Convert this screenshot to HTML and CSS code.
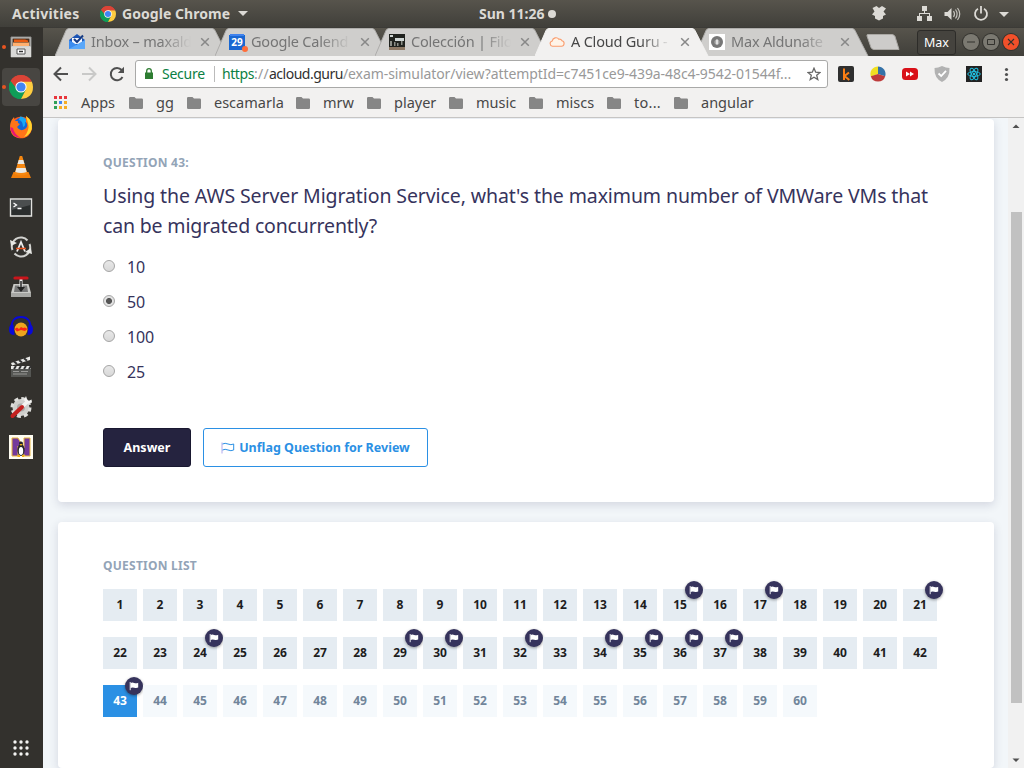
FILE: index.html
```html
<!DOCTYPE html>
<html lang="en">
<head>
<meta charset="utf-8">
<title>A Cloud Guru - Exam Simulator</title>
<link rel="stylesheet" href="styles.css">
</head>
<body>
<svg class="defs" aria-hidden="true">
  <symbol id="folder" viewBox="0 0 14 12"><path d="M1.3 0H5.5L7 1.5H12.7Q14 1.5 14 2.8V10.7Q14 12 12.7 12H1.3Q0 12 0 10.7V1.3Q0 0 1.3 0Z" fill="#868686"/></symbol>
  <symbol id="flag" viewBox="0 0 18 18"><path d="M5.2 5V13.2" stroke="#fff" stroke-width=".9"/><path d="M5.6 6Q7.3 5.2 9.2 6Q11.2 6.7 13.2 5.8V10.6Q11.3 11.4 9.2 10.7Q7.3 10 5.6 10.9Z" fill="#fff"/></symbol>
  <symbol id="chrome" viewBox="0 0 24 24"><path d="M12 12L1.6 6A12 12 0 0 1 22.4 6Z" fill="#db4437"/><path d="M12 12V24A12 12 0 0 1 1.6 6Z" fill="#0f9d58"/><path d="M1.6 6L7 15Q9 17.5 12 17.5L16.8 15L12 24Q4 24 1 17Q-1 11 1.6 6Z" fill="#0f9d58"/><path d="M16.8 14.8L12 24Q24 23 24 12Q24 9 22.7 6.5H12Z" fill="#ffcd40"/><path d="M1.6 6Q5 0 12 0Q19.5 .3 22.7 6.5H12Q7.5 7 6.7 12.5Z" fill="#db4437"/><circle cx="12" cy="12" r="5.6" fill="#fff"/><circle cx="12" cy="12" r="4.6" fill="#4285f4"/></symbol>
  <symbol id="tabshape" viewBox="0 0 174 28"><path d="M0 28L11 2.5Q12 .5 14 .5H157Q159 .5 160 2.5L173 28"/></symbol>
  <symbol id="close" viewBox="0 0 10 10"><path d="M1.2 1.2L8.8 8.8M8.8 1.2L1.2 8.8" stroke="#888" stroke-width="1.5"/></symbol>
</svg>

<header class="topbar">
  <span class="activities">Activities</span>
  <svg class="app-icon"><use href="#chrome"/></svg>
  <span class="app-name">Google Chrome</span>
  <svg class="caret" viewBox="0 0 10 5"><path d="M0 0H10L5 5Z" fill="#dcdad5"/></svg>
  <span class="clock"><span>Sun 11:26</span><i class="clock-dot"></i></span>
  <svg class="tray" viewBox="0 0 144 20" fill="#dcdad5">
    <path d="M3.5 4L7.5 2L10 4L13 2L17 4.5L14.5 7.5L17 10.5L14 12L14 14.5L10 16.5L6 14.5L6 12L3 10.5L5.5 7.5Z"/>
    <path transform="translate(2)" d="M51 2H56V7H51ZM46 12H51V17H46ZM56 12H61V17H56ZM53 7H54V9H59V12H58V10H49V12H48V9H53Z"/>
    <g transform="translate(1.5)"><path d="M74 8H77L81 4V16L77 12H74Z"/><path d="M83 7Q85 10 83 13M85 5.5Q88.2 10 85 14.5M87 4Q91.5 10 87 16" fill="none" stroke="#c5c3bd" stroke-width="1.2"/></g>
    <path transform="translate(3)" d="M106 4.7A6 6 0 1 0 112 4.7M109 2V9.5" fill="none" stroke="#dcdad5" stroke-width="1.8"/>
    <path transform="translate(2)" d="M128 8H138L133 13Z"/>
  </svg>
</header>

<div class="desktop">
  <nav class="dock">
    <div class="dock-item running"><svg viewBox="0 0 24 24"><path d="M2 2H22V22H2Z" fill="#c9c9c7" stroke="#8d8d8b"/><path d="M3.5 3.5H20.5V11H3.5Z" fill="#4a3020"/><path d="M5 4.5H16L19 5.5V7H5Z" fill="#e95a10"/><path d="M4 7.5H20V11H4Z" fill="#ffb070"/><path d="M2 11.5H22V22H2Z" fill="#d9d9d7"/><path d="M8 14H16V19H8Z" fill="#fff" stroke="#555"/><path d="M10 16.5H14" stroke="#333" stroke-width="1.5"/></svg></div>
    <div class="dock-item running active"><svg viewBox="0 0 24 24"><use href="#chrome"/></svg></div>
    <div class="dock-item"><svg viewBox="0 0 24 24"><circle cx="12" cy="12.5" r="10.8" fill="#ff5a20"/><circle cx="12.5" cy="11" r="8.2" fill="#1467d8"/><path d="M11 1.5Q17 2 19 8L16 7Q17 11 14 12Q14 6 10 5Z" fill="#18a8f5"/><path d="M17 1Q24 6 22.8 14Q20 23 12 23Q3 23 1.5 15Q0 7 5 2L6 6L9 6Q8 8 11 9L8 12Q11 17 16 14Q20 11 17 7Z" fill="#ff7418"/><path d="M17 1Q24 6 22.8 14Q21 20 15 22Q21 15 19 8Z" fill="#ffd52e"/><path d="M1.3 12Q2 22 12 23.2Q5 19 4 13Z" fill="#e91674"/></svg></div>
    <div class="dock-item"><svg viewBox="0 0 24 24"><path d="M4.5 17H19.5L22 23H2Z" fill="#ef7d0a"/><path d="M10.8 1H13.2L18.5 19Q12 22 5.5 19Z" fill="#f58711"/><path d="M9.7 5H14.3L15.5 9H8.5ZM7.4 13H16.6L17.7 17Q12 19 6.3 17Z" fill="#e8e8e5"/></svg></div>
    <div class="dock-item"><svg viewBox="0 0 24 24"><path d="M1.5 4H22.5V21H1.5Z" fill="#2b2e2e" stroke="#e2e2df" stroke-width="1.4"/><path d="M2.5 5H21.5V10L2.5 15Z" fill="#4b4e4f"/><path d="M4.5 8L7.5 10L4.5 12M8.5 13.5H12.5" fill="none" stroke="#fff" stroke-width="1.3"/></svg></div>
    <div class="dock-item"><svg viewBox="0 0 24 24" fill="none"><path d="M3.5 15A9 9 0 0 1 18.5 5.5M20.5 9A9 9 0 0 1 5.5 18.5" stroke="#d2d2cf" stroke-width="2"/><path d="M1 5L2 11L8 8ZM23 19L22 13L16 17Z" fill="#e7e7e4"/><path d="M8 16.5L12 7L16 16.5" stroke="#eee" stroke-width="1.8"/><path d="M7 13.5H17" stroke="#e95420" stroke-width="1.5"/></svg></div>
    <div class="dock-item"><svg viewBox="0 0 24 24"><path d="M4.5 9H19.5L22 18V22H2V18Z" fill="#cacac7"/><path d="M6 10.5H18L19 17H5Z" fill="#777"/><path d="M2 18H22V22H2Z" fill="#a7a7a4"/><path d="M12 4V14" stroke="#eee" stroke-width="3"/><path d="M8 12L12 17L16 12" fill="#222"/><path d="M12 6V14" stroke="#222" stroke-width="1.5"/><path d="M6 3H18" stroke="#c9151b" stroke-width="3.2" stroke-linecap="round"/></svg></div>
    <div class="dock-item"><svg viewBox="0 0 24 24"><path d="M2.5 14Q2 2 12 2T21.5 14" fill="none" stroke="#0909d8" stroke-width="2"/><ellipse cx="12" cy="14.5" rx="6.5" ry="7" fill="#eda51e"/><path d="M5.5 14L8 12.5L10 14L12 12L14 13L16 12.5L18.5 14L16 16L12 15L8 16.5Z" fill="#fa2415"/><path d="M4.5 9.5Q0 9 0 14.5T5.5 20ZM19.5 9.5Q24 9 24 14.5T18.5 20Z" fill="#0909d8"/></svg></div>
    <div class="dock-item"><svg viewBox="0 0 24 24"><path d="M2 11H22V22H2Z" fill="#555653"/><path d="M2 8L21 1.5V5L3 10.5Z" fill="#e9e9e6"/><path d="M5 6.5L8 9M10 5L13 7.5M15 3.3L18 5.8" stroke="#333" stroke-width="2"/><path d="M2 11H22V14H2Z" fill="#e9e9e6"/><path d="M5 14L7 11M10 14L12 11M15 14L17 11M20 14L22 11" stroke="#333" stroke-width="2"/><path d="M4 16.5H10M12 16.5H19M4 19H18" stroke="#aaaaa7" stroke-width=".8"/></svg></div>
    <div class="dock-item"><svg viewBox="0 0 24 24"><circle cx="12" cy="12.5" r="8.5" fill="#cfcfcc"/><circle cx="12" cy="12.5" r="9" fill="none" stroke="#dededb" stroke-width="3" stroke-dasharray="4 3.07"/><circle cx="12" cy="12.5" r="4" fill="#a9a9a6"/><path d="M13 12L19 6" stroke="#f4f4f2" stroke-width="3.5"/><path d="M17 1L15 5L18 9L23 7.5L22.5 4.5L19.5 6L18 4Z" fill="#f4f4f2"/><path d="M3.5 21L13 12" stroke="#c3211f" stroke-width="4" stroke-linecap="round"/></svg></div>
    <div class="dock-item"><svg viewBox="0 0 24 24"><path d="M0 0H24V24H0Z" fill="#fffdf2"/><path d="M3 3H9L15 13V3H21V21H16L9 11V21H3Z" fill="#743a9b" stroke="#e8b53c"/><ellipse cx="12" cy="15" rx="3.6" ry="6" fill="#25252a"/><ellipse cx="12" cy="16" rx="2.2" ry="4" fill="#fff"/><circle cx="12" cy="8.5" r="2" fill="#25252a"/><path d="M10.5 9H13.5L12 11ZM8.5 20H11V22H8.5ZM13 20H15.5V22H13Z" fill="#f3b116"/></svg></div>
    <div class="apps-grid"><svg viewBox="0 0 16 16" fill="#f4f4f2"><circle cx="2" cy="2" r="1.7"/><circle cx="8" cy="2" r="1.7"/><circle cx="14" cy="2" r="1.7"/><circle cx="2" cy="8" r="1.7"/><circle cx="8" cy="8" r="1.7"/><circle cx="14" cy="8" r="1.7"/><circle cx="2" cy="14" r="1.7"/><circle cx="8" cy="14" r="1.7"/><circle cx="14" cy="14" r="1.7"/></svg></div>
  </nav>

  <div class="browser">
    <div class="tabstrip">
      <div class="tab"><svg class="tab-bg"><use href="#tabshape"/></svg>
        <svg class="favicon" viewBox="0 0 16 16"><path d="M0 6L8 0L16 6V15H0Z" fill="#1b54b5"/><path d="M3 4H13V10H3Z" fill="#f5f8ff"/><path d="M5 5L8 8L14 1.5" fill="none" stroke="#183c83" stroke-width="2"/><path d="M0 6L8 11L16 6V15H0Z" fill="#3c8cf0"/><path d="M0 15L16 6V15Z" fill="#59a7fa"/></svg>
        <span class="tab-title">Inbox – maxald</span><svg class="tab-close"><use href="#close"/></svg></div>
      <div class="tab"><svg class="tab-bg"><use href="#tabshape"/></svg>
        <svg class="favicon" viewBox="0 0 16 16"><path d="M0 1H16V16H0Z" fill="#1967d2"/><path d="M1 0H15V2H1Z" fill="#3f82ee"/><text x="8" y="12.3" class="cal-day">29</text><circle cx="16" cy="15" r="3" fill="#ff6d3a"/></svg>
        <span class="tab-title">Google Calend</span><svg class="tab-close"><use href="#close"/></svg></div>
      <div class="tab"><svg class="tab-bg"><use href="#tabshape"/></svg>
        <svg class="favicon" viewBox="0 0 16 16"><path d="M0 0H16V16H0Z" fill="#20231f"/><path d="M1 1H4V3H1ZM6 4H15V7H6Z" fill="#cfd6d4"/><path d="M1 7H3V12H1ZM5 8H6.5V12H5ZM8 9H9.5V12H8ZM12 7H13.5V11H12Z" fill="#8c8f88"/><path d="M0 13H16V16H0Z" fill="#8d7965"/></svg>
        <span class="tab-title">Colección | Filo</span><svg class="tab-close"><use href="#close"/></svg></div>
      <div class="tab current"><svg class="tab-bg"><use href="#tabshape"/></svg>
        <svg class="favicon" viewBox="0 0 16 16"><path d="M3.5 12.3H12.5A2.8 2.8 0 0 0 13 6.8A2.3 2.3 0 0 0 10 5.3A3.8 3.8 0 0 0 3.2 7A2.7 2.7 0 0 0 3.5 12.3Z" fill="#fff4e8" stroke="#fa9c6c" stroke-width="1.1"/></svg>
        <span class="tab-title">A Cloud Guru -</span><svg class="tab-close"><use href="#close"/></svg></div>
      <div class="tab"><svg class="tab-bg"><use href="#tabshape"/></svg>
        <svg class="favicon" viewBox="0 0 16 16"><path d="M0 0H16V16H0Z" fill="#fff"/><circle cx="8" cy="8" r="6" fill="#777"/><circle cx="8" cy="8" r="2.6" fill="#aaa"/><path d="M7.2 5.5H8.8V10.5H7.2Z" fill="#eee"/></svg>
        <span class="tab-title">Max Aldunate</span><svg class="tab-close"><use href="#close"/></svg></div>
      <svg class="new-tab" viewBox="0 0 34 16"><path d="M2 .5H26Q28 .5 29 2.5L33 15.5H8Q6 15.5 5 13.5L1 2Q.5 .5 2 .5Z" fill="#cdccca" stroke="#aaa8a4"/></svg>
      <div class="window-controls">
        <span class="profile">Max</span>
        <span class="wbtn"><svg viewBox="0 0 16 16"><path d="M4 8H12" stroke="#33322e"/></svg></span>
        <span class="wbtn"><svg viewBox="0 0 16 16"><path d="M4.5 5.5H11.5V10.5H4.5Z" fill="none" stroke="#33322e"/></svg></span>
        <span class="wbtn quit"><svg viewBox="0 0 16 16"><path d="M5 5L11 11M11 5L5 11" stroke="#33322e" stroke-width="1.1"/></svg></span>
      </div>
    </div>

    <div class="toolbar">
      <div class="nav-row">
        <svg class="nav" viewBox="0 0 16 16"><path d="M15 8H2M8 1.5L1.5 8L8 14.5" fill="none" stroke="#505050" stroke-width="2"/></svg>
        <svg class="nav" viewBox="0 0 16 16"><path d="M1 8H14M8 1.5L14.5 8L8 14.5" fill="none" stroke="#c9c9c8" stroke-width="2"/></svg>
        <svg class="nav" viewBox="0 0 16 16"><path d="M13.5 11A6.2 6.2 0 1 1 12.7 4" fill="none" stroke="#505050" stroke-width="2"/><path d="M15 .8V7H8.8Z" fill="#505050"/></svg>
        <div class="omnibox">
          <svg class="lock" viewBox="0 0 8 11"><path d="M0 4.5H8V11H0Z" fill="#2e7d32"/><path d="M1.7 5V3A2.3 2.3 0 0 1 6.3 3V5" fill="none" stroke="#2e7d32" stroke-width="1.3"/></svg>
          <span class="secure">Secure</span><i class="sep"></i>
          <span class="url"><span class="scheme">https</span><span class="dim slashes">://</span><span class="host">acloud.guru</span><span class="dim path">/exam-simulator/view?attemptId=c7451ce9-439a-48c4-9542-01544f...</span></span>
          <svg class="star" viewBox="0 0 14 14"><path d="M7 1.2L8.7 5.2L13 5.5L9.7 8.3L10.8 12.6L7 10.3L3.2 12.6L4.3 8.3L1 5.5L5.3 5.2Z" fill="none" stroke="#666" stroke-width="1.3"/></svg>
        </div>
        <div class="extensions">
          <svg viewBox="0 0 16 16"><rect width="16" height="16" rx="2" fill="#2f2f2f"/><path d="M6 2.5V14M11 6.5L6.5 10L11.3 14" fill="none" stroke="#fb7e14" stroke-width="2"/></svg>
          <svg viewBox="0 0 16 16"><path d="M8 8L.8 10.4A7.5 7.5 0 0 1 8 .5Z" fill="#f0df22"/><path d="M8 8V.5A7.5 7.5 0 0 1 15.2 10.2Z" fill="#3572a8"/><path d="M8 8L15.2 10.2A7.5 7.5 0 0 1 .8 10.2Z" fill="#be3b3b"/></svg>
          <svg viewBox="0 0 16 16"><rect y="2" width="16" height="12" rx="3.5" fill="#d91018"/><path d="M4 5.5L8 8L4 10.5ZM8 5.5L12 8L8 10.5Z" fill="#fff"/></svg>
          <svg viewBox="0 0 16 16"><path d="M8 0Q12 2 15.5 2Q16 12 8 16Q0 12 .5 2Q4 2 8 0Z" fill="#b2b2b2"/><path d="M4.5 7.5L7.2 10L12 4.8" fill="none" stroke="#fff" stroke-width="1.8"/></svg>
          <svg viewBox="0 0 16 16"><path d="M0 0H16V16H0Z" fill="#222"/><g fill="none" stroke="#20bfe0"><ellipse cx="8" cy="8" rx="6.3" ry="2.4"/><ellipse cx="8" cy="8" rx="6.3" ry="2.4" transform="rotate(60 8 8)"/><ellipse cx="8" cy="8" rx="6.3" ry="2.4" transform="rotate(120 8 8)"/></g><circle cx="8" cy="8" r="1.3" fill="#20bfe0"/></svg>
          <svg viewBox="0 0 16 16" fill="#505050"><circle cx="8.5" cy="3.5" r="1.6"/><circle cx="8.5" cy="8.5" r="1.6"/><circle cx="8.5" cy="13.5" r="1.6"/></svg>
        </div>
      </div>
      <div class="bookmarks">
        <svg class="apps-icon" viewBox="0 0 13 13"><path d="M0 0H3V3H0ZM5 0H8V3H5ZM10 0H13V3H10Z" fill="#e8353b"/><path d="M0 5H3V8H0ZM0 10H3V13H0Z" fill="#2f9f58"/><path d="M5 5H8V8H5Z" fill="#4285f4"/><path d="M10 5H13V8H10ZM5 10H8V13H5ZM10 10H13V13H10Z" fill="#f6ad26"/></svg>
        <span>Apps</span>
        <span class="bm"><svg><use href="#folder"/></svg><span>gg</span></span>
        <span class="bm"><svg><use href="#folder"/></svg><span>escamarla</span></span>
        <span class="bm"><svg><use href="#folder"/></svg><span>mrw</span></span>
        <span class="bm"><svg><use href="#folder"/></svg><span>player</span></span>
        <span class="bm"><svg><use href="#folder"/></svg><span>music</span></span>
        <span class="bm"><svg><use href="#folder"/></svg><span>miscs</span></span>
        <span class="bm"><svg><use href="#folder"/></svg><span class="elided">to...</span></span>
        <span class="bm"><svg><use href="#folder"/></svg><span>angular</span></span>
      </div>
    </div>

    <div class="viewport">
      <main class="content">
        <section class="card question">
          <h2 class="label">QUESTION 43:</h2>
          <p class="prompt">Using the AWS Server Migration Service, what's the maximum number of VMWare VMs that<br><span class="second">can be migrated concurrently?</span></p>
          <div class="choices">
            <div class="choice"><i class="radio"></i><span>10</span></div>
            <div class="choice"><i class="radio checked"></i><span>50</span></div>
            <div class="choice"><i class="radio"></i><span>100</span></div>
            <div class="choice"><i class="radio"></i><span>25</span></div>
          </div>
          <div class="actions">
            <div class="btn primary">Answer</div>
            <div class="btn outline"><svg viewBox="0 0 14 12"><path d="M1 .5V11.5" stroke="#b3a8ec"/><path d="M1.5 2Q4 .6 7 2T12.7 2V8Q10 9.4 7 8T1.5 8" fill="none" stroke="#2b90e4"/></svg><span>Unflag Question for Review</span></div>
          </div>
        </section>
        <section class="card list">
          <h2 class="label">QUESTION LIST</h2>
          <ol class="numbers">
            <li>1</li><li>2</li><li>3</li><li>4</li><li>5</li><li>6</li><li>7</li><li>8</li><li>9</li><li>10</li><li>11</li><li>12</li><li>13</li><li>14</li>
            <li>15<svg><use href="#flag"/></svg></li><li>16</li><li>17<svg><use href="#flag"/></svg></li><li>18</li><li>19</li><li>20</li><li>21<svg><use href="#flag"/></svg></li>
            <li>22</li><li>23</li><li>24<svg><use href="#flag"/></svg></li><li>25</li><li>26</li><li>27</li><li>28</li><li>29<svg><use href="#flag"/></svg></li><li>30<svg><use href="#flag"/></svg></li><li>31</li><li>32<svg><use href="#flag"/></svg></li><li>33</li><li>34<svg><use href="#flag"/></svg></li><li>35<svg><use href="#flag"/></svg></li><li>36<svg><use href="#flag"/></svg></li><li>37<svg><use href="#flag"/></svg></li><li>38</li><li>39</li><li>40</li><li>41</li><li>42</li>
            <li class="now">43<svg><use href="#flag"/></svg></li><li class="todo">44</li><li class="todo">45</li><li class="todo">46</li><li class="todo">47</li><li class="todo">48</li><li class="todo">49</li><li class="todo">50</li><li class="todo">51</li><li class="todo">52</li><li class="todo">53</li><li class="todo">54</li><li class="todo">55</li><li class="todo">56</li><li class="todo">57</li><li class="todo">58</li><li class="todo">59</li><li class="todo">60</li>
          </ol>
        </section>
      </main>
      <div class="scrollbar">
        <svg viewBox="0 0 16 16"><path d="M4.5 10H11.5L8 6.5Z" fill="#505050"/></svg>
        <i class="thumb"></i>
        <svg viewBox="0 0 16 16"><path d="M4.5 6.5H11.5L8 10Z" fill="#505050"/></svg>
      </div>
    </div>
  </div>
</div>
</body>
</html>
```
FILE: styles.css
```css
* { box-sizing: border-box; }
body { margin: 0; width: 1024px; height: 768px; overflow: hidden; display: flex; flex-direction: column; font-family: "Noto Sans", "Open Sans", sans-serif; font-size: 14.5px; color: #474747; }
svg { display: block; flex: none; }
.defs { position: absolute; width: 0; height: 0; }

.topbar { height: 27px; flex: none; display: flex; align-items: center; padding-left: 12px; background: linear-gradient(#57544c, #403f3a); color: #dcdad5; font-weight: 700; font-size: 14px; line-height: 27px; white-space: nowrap; }
.activities { width: 88px; letter-spacing: .25px; }
.app-icon { width: 16px; height: 16px; margin-right: 6px; }
.app-name { width: 110px; letter-spacing: .05px; }
.caret { width: 10px; height: 5px; margin-left: 6px; }
.clock { display: flex; align-items: center; margin-left: 231px; width: 80px; }
.clock-dot { width: 8px; height: 8px; border-radius: 50%; background: #dcdad5; margin-left: 3px; flex: none; }
.tray { width: 144px; height: 20px; margin-left: 310px; }

.desktop { flex: 1; display: flex; min-height: 0; }
.dock { width: 43px; flex: none; background: #33312d; display: flex; flex-direction: column; }
.dock-item { height: 40px; display: flex; align-items: center; justify-content: center; position: relative; padding-right: 1px; }
.dock-item svg { width: 24px; height: 24px; position: relative; }
.dock-item.active::before { content: ""; position: absolute; left: 2px; top: 1px; width: 38px; height: 38px; border-radius: 4px; background: #484642; }
.dock-item.running::after { content: ""; position: absolute; left: 2px; top: 18px; width: 4px; height: 4px; border-radius: 50%; background: #e95420; }
.apps-grid { margin-top: auto; padding: 0 0 12px 13px; }
.apps-grid svg { width: 16px; height: 16px; }

.browser { flex: 1; min-width: 0; display: flex; flex-direction: column; }
.tabstrip { height: 29px; flex: none; display: flex; padding-left: 12px; background: linear-gradient(#57544c, #403f3a); border-top: 1px solid #3c3b37; }
.tab { width: 174px; height: 28px; margin-right: -14px; flex: none; display: flex; align-items: center; padding-left: 14px; position: relative; color: #757575; }
.tab-bg { position: absolute; left: 0; top: 0; width: 174px; height: 28px; fill: #cfcecc; stroke: #aeadab; }
.current { z-index: 2; color: #474747; }
.current .tab-bg { fill: #f2f1f0; stroke: #f2f1f0; }
.favicon { width: 16px; height: 16px; position: relative; overflow: visible; }
.cal-day { font: bold 10px "Noto Sans", sans-serif; fill: #fff; text-anchor: middle; }
.tab-title { width: 102px; margin-left: 6px; letter-spacing: -.2px; white-space: nowrap; position: relative; line-height: 20px; margin-top: -2px; -webkit-mask-image: linear-gradient(90deg, #000 68%, transparent 98%); mask-image: linear-gradient(90deg, #000 68%, transparent 98%); }
.tab-close { width: 10px; height: 10px; margin-left: 7px; position: relative; }
.new-tab { width: 34px; height: 16px; margin: 6px 0 0 11px; }
.window-controls { margin-left: auto; padding-right: 5px; display: flex; align-items: center; gap: 4px; }
.profile { width: 39px; height: 25px; line-height: 23px; border: 1px solid #2d2c29; border-radius: 3px; background: #45433e; color: #fff; font-size: 12.5px; text-align: center; margin-right: 3px; }
.wbtn { width: 16px; height: 16px; border-radius: 50%; background: #7b7971; box-shadow: 0 0 0 1px #33322e; }
.wbtn svg { width: 16px; height: 16px; }
.quit { background: #f2502a; }

.toolbar { height: 62px; flex: none; background: #f2f1f0; border-bottom: 1px solid #c6c5c4; }
.nav-row { height: 36px; display: flex; align-items: center; padding-left: 10px; }
.nav { width: 16px; height: 16px; margin-right: 12px; }
.omnibox { width: 693px; height: 28px; margin-left: -2px; background: #fff; border: 1px solid #a9a9a8; border-radius: 3px; display: flex; align-items: center; padding-left: 9px; white-space: nowrap; font-size: 14px; line-height: 20px; padding-bottom: 1px; }
.lock { width: 8px; height: 11px; margin-right: 9px; }
.secure { color: #0b8043; width: 43px; letter-spacing: -.25px; }
.sep { width: 1px; height: 16px; background: #bbb; margin: 0 7px 0 9px; }
.url { width: 585px; display: flex; }
.scheme { color: #0b8043; letter-spacing: -.42px; }
.dim { color: #999; }
.slashes { letter-spacing: .27px; }
.host { color: #303030; letter-spacing: -.49px; }
.path { letter-spacing: -.08px; }
.star { width: 14px; height: 14px; }
.extensions { display: flex; gap: 16px; margin-left: 10px; }
.extensions svg { width: 16px; height: 16px; }
.bookmarks { display: grid; grid-template-columns: 27px 48px 58px 109px 71px 82px 80px 78px 67px 90px; align-items: center; height: 20px; line-height: 20px; padding-left: 11px; white-space: nowrap; }
.apps-icon { width: 13px; height: 13px; }
.bm { display: flex; align-items: center; gap: 13px; }
.bm svg { width: 14px; height: 12px; margin-top: 1px; }
.elided { letter-spacing: .27px; }

.viewport { flex: 1; min-height: 0; display: flex; background: #f2f6f9; }
.content { flex: 1; padding: 1px 14px 0 15px; overflow: hidden; }
.card { background: #fff; border-radius: 4px; box-shadow: 0 3px 10px rgba(50, 50, 93, .16); padding: 35px 45px 0; }
.question { height: 383px; margin-bottom: 20px; }
.list { height: 246px; }
.label { margin: 0; font-size: 12px; line-height: 18px; font-weight: 700; color: #93a4b7; letter-spacing: .25px; }
.prompt { margin: 9px 0 0; font-size: 19.5px; line-height: 30px; color: #36335c; white-space: nowrap; letter-spacing: -.105px; }
.second { letter-spacing: -.16px; }
.choices { padding-top: 8px; }
.choice { height: 35px; display: flex; align-items: center; gap: 12px; font-size: 16px; letter-spacing: -.16px; color: #36335c; }
.radio { width: 12px; height: 12px; margin-top: -1px; border-radius: 50%; border: 1px solid #a5a5a5; background: linear-gradient(#e8e8e8, #d8d8d8); }
.checked { background: radial-gradient(circle, #555 0 2.6px, #e2e2e2 3.4px); }
.actions { display: flex; gap: 12px; padding-top: 39px; }
.btn { height: 39px; border-radius: 3px; display: flex; align-items: center; justify-content: center; font-weight: 700; font-size: 12.5px; white-space: nowrap; }
.primary { width: 88px; background: #25233f; border: 1px solid #191830; color: #fff; }
.outline { width: 225px; border: 1px solid #2b90e4; color: #2b90e4; gap: 4px; }
.outline svg { width: 14px; height: 12px; }
.numbers { list-style: none; margin: 14px 0 0; padding: 0; display: grid; grid-template-columns: repeat(21, 34px); gap: 16px 6px; }
.numbers li { height: 32px; background: #e5ecf2; color: #1d1d1d; font-size: 12px; font-weight: 700; line-height: 32px; text-align: center; position: relative; }
.numbers svg { position: absolute; left: 22px; top: -8px; width: 18px; height: 18px; border-radius: 50%; background: #36335c; box-shadow: 0 1px 3px rgba(0, 0, 0, .4); }
.numbers .now { background: #2b90e4; color: #fff; }
.numbers .todo { background: #f5f9fc; color: #71859a; }
.scrollbar { width: 16px; background: #f1f1f1; display: flex; flex-direction: column; align-items: center; }
.scrollbar svg { width: 16px; height: 16px; }
.thumb { width: 11px; height: 491px; margin-top: 78px; margin-bottom: auto; background: #c1c1c1; }
```
